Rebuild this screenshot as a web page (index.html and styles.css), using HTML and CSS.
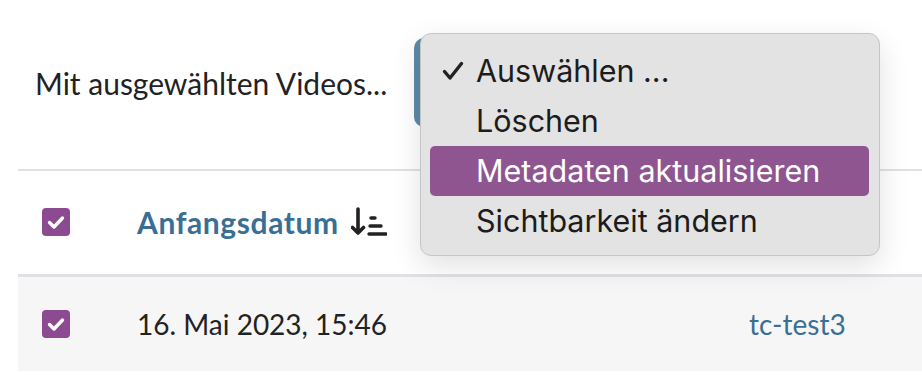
FILE: index.html
```html
<!DOCTYPE html>
<html lang="de">
<head>
    <meta charset="UTF-8">
    <title>Videos</title>
    <link rel="stylesheet" href="styles.css">
</head>
<body>
    <div class="page">
        <div class="toolbar">
            <span class="toolbar-label">Mit ausgewählten Videos...</span>
            <button class="action-btn"></button>
        </div>
        <table class="videos">
            <thead>
                <tr>
                    <th class="col-check"><span class="checkbox"><svg viewBox="0 0 28 28" width="28" height="28"><path d="M7.5 14.5l4.5 4.5 8.5-9" fill="none" stroke="#fff" stroke-width="3.4" stroke-linecap="round" stroke-linejoin="round"/></svg></span></th>
                    <th class="col-date">
                        <a href="#" class="sort-link">Anfangsdatum</a>
                        <svg class="sort-icon" viewBox="0 0 36 30" width="36" height="30"><path d="M7 2v24M1.5 20.5L7 26l5.5-5.5" fill="none" stroke="#222" stroke-width="3.6" stroke-linecap="round" stroke-linejoin="round"/><path d="M20 11h4M19 19h11M18 27h17" fill="none" stroke="#222" stroke-width="3.4" stroke-linecap="round"/></svg>
                    </th>
                    <th class="col-series"></th>
                </tr>
            </thead>
            <tbody>
                <tr>
                    <td class="col-check"><span class="checkbox"><svg viewBox="0 0 28 28" width="28" height="28"><path d="M7.5 14.5l4.5 4.5 8.5-9" fill="none" stroke="#fff" stroke-width="3.4" stroke-linecap="round" stroke-linejoin="round"/></svg></span></td>
                    <td class="col-date">16. Mai 2023, 15:46</td>
                    <td class="col-series"><a href="#">tc-test3</a></td>
                </tr>
            </tbody>
        </table>

        <ul class="select-menu">
            <li><svg class="tick" viewBox="0 0 22 22" width="22" height="22"><path d="M2.5 11.5l5.5 6.5L19.5 3.5" fill="none" stroke="#222" stroke-width="3.4" stroke-linecap="round" stroke-linejoin="round"/></svg>Auswählen ...</li>
            <li>Löschen</li>
            <li class="active">Metadaten aktualisieren</li>
            <li>Sichtbarkeit ändern</li>
        </ul>
    </div>
</body>
</html>
```

FILE: styles.css
```css
:root {
    --lila: #8c4a91;
    --lila-menu: #8e5590;
    --blau: #3a6f95;
    --text: #1f2226;
    --linie: #dfe1e5;
}

body {
    margin: 0;
    background: #fff;
    font-family: Lato, "Noto Sans", sans-serif;
    color: var(--text);
}

.page {
    position: relative;
    padding-left: 18px;
    overflow: hidden;
    height: 384px;
}

.toolbar {
    height: 169px;
    display: flex;
    align-items: center;
    padding-left: 17px;
    border-bottom: 2px solid var(--linie);
}

.toolbar-label {
    font-size: 30px;
    margin-top: -4px;
}

.action-btn {
    margin-left: 27px;
    margin-top: -4px;
    width: 200px;
    height: 89px;
    border: none;
    border-radius: 10px;
    background-color: #5d8aa8;
}

.videos {
    width: 1000px;
    border-collapse: collapse;
}

.videos th,
.videos td {
    text-align: left;
    padding: 0;
    vertical-align: middle;
}

.videos thead tr {
    height: 104px;
    border-bottom: 3px solid var(--linie);
}

.videos tbody tr {
    height: 96px;
    background-color: #f6f6f6;
}

.col-check {
    width: 95px;
    padding-left: 24px !important;
}

.checkbox {
    display: block;
    width: 28px;
    height: 28px;
    border-radius: 4px;
    background-color: var(--lila);
}

.checkbox svg {
    display: block;
}

.col-date {
    width: 612px;
    font-size: 28px;
    white-space: nowrap;
}

.sort-link {
    font-size: 30px;
    font-weight: 700;
    letter-spacing: 0.6px;
    color: var(--blau);
    text-decoration: none;
}

.sort-icon {
    vertical-align: -3px;
    margin-left: 5px;
}

.col-series a {
    font-size: 28px;
    color: var(--blau);
    text-decoration: none;
}

.select-menu {
    position: absolute;
    left: 420px;
    top: 33px;
    width: 458px;
    margin: 0;
    padding: 12px 0 9px;
    list-style: none;
    background-color: #e3e3e3;
    border: 1px solid #c6c6c6;
    border-radius: 11px;
    box-shadow: 0 10px 30px rgba(0, 0, 0, 0.12);
    font-family: Inter, "Liberation Sans", Arial, sans-serif;
    font-size: 30.5px;
    color: #1c1c1c;
}

.select-menu li {
    position: relative;
    height: 50px;
    line-height: 50px;
    margin: 0 10px 0 9px;
    padding-left: 46px;
    border-radius: 5px;
}

.select-menu li.active {
    background-color: var(--lila-menu);
    color: #fff;
}

.tick {
    position: absolute;
    left: 12px;
    top: 14px;
}
```
